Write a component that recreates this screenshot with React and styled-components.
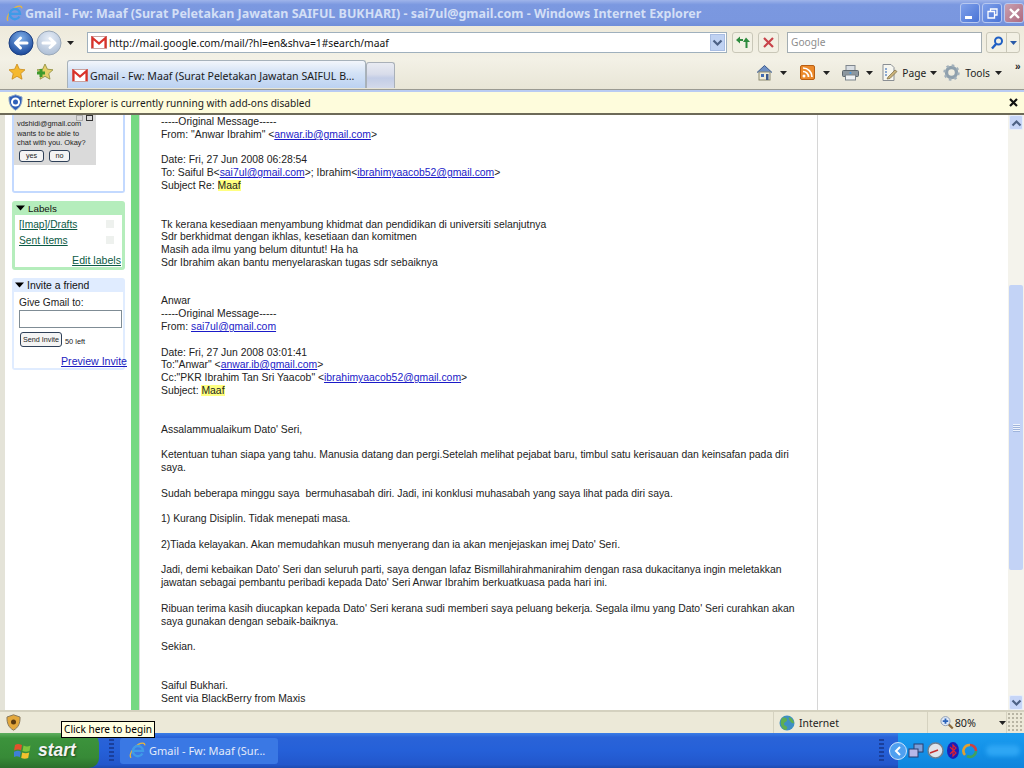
import React from "react"
import styled, { createGlobalStyle } from "styled-components"

const GlobalStyle = createGlobalStyle`
	html, body {
		margin: 0;
		padding: 0;
		background: #fff;
		overflow: hidden;
	}
	* {
		box-sizing: border-box;
	}
`

const GmailIcon = ({ size = 16 }) => (
	<svg width={size} height={(size * 13) / 16} viewBox="0 0 16 13">
		<rect x="0.5" y="0.5" width="15" height="12" fill="#fff" stroke="#c9a3a0" />
		<path d="M1.5 12V2L8 7.5 14.5 2V12" fill="none" stroke="#d9322a" strokeWidth="2.2" />
	</svg>
)

const IeLogo = ({ size = 16 }) => (
	<svg width={size} height={size} viewBox="0 0 20 20">
		<path d="M2.500 18.500C-.5 16 4 6.500 11 2.800c3.500-1.800 8-2.300 7.500 1.200" fill="none" stroke="#e8b63c" strokeWidth="1.500" />
		<path d="M15.800 13.500A6 6 0 1 1 16.500 10.500H5" fill="none" stroke="#3f9be8" strokeWidth="2.800" />
	</svg>
)

const NavButton = ({ dim }) => (
	<svg width="26" height="26" viewBox="0 0 26 26">
		<defs>
			<radialGradient id={dim ? "navDim" : "navOn"} cx="50%" cy="30%" r="75%">
				<stop offset="0" stopColor={dim ? "#e6edf7" : "#7fb0ea"} />
				<stop offset="1" stopColor={dim ? "#a9bbd3" : "#123f94"} />
			</radialGradient>
		</defs>
		<circle cx="13" cy="13" r="12" fill={`url(#${dim ? "navDim" : "navOn"})`} stroke={dim ? "#9aa8b8" : "#1c3f80"} />
		<path
			d={dim ? "M7 13h11M14 8.500l5 4.500-5 4.500" : "M19 13H8M12.500 8 7.500 13l5 5"}
			fill="none"
			stroke="#fff"
			strokeWidth="3"
			strokeLinecap="round"
			strokeLinejoin="round"
		/>
	</svg>
)

const Star = ({ plus }) => (
	<svg width="18" height="18" viewBox="0 0 18 18">
		<path
			d="M9 1l2.400 5.200 5.600.6-4.200 3.800 1.200 5.600L9 13.300 4 16.200l1.200-5.600L1 6.800l5.600-.6z"
			fill={plus ? "#e6cf6a" : "#f5b92f"}
			stroke={plus ? "#8a8a3a" : "#c98a1a"}
			strokeWidth="0.800"
		/>
		{plus && <path d="M1 10h8M5 6v8" stroke="#3f9a2c" strokeWidth="3" />}
	</svg>
)

const Caret = ({ color = "#222", w = 7, h = 4 }) => (
	<svg width={w} height={h} viewBox="0 0 7 4">
		<path d="M0 0h7L3.500 4z" fill={color} />
	</svg>
)

const Chevron = ({ up }) => (
	<svg width="11" height="8" viewBox="0 0 11 8">
		<path d={up ? "M1.500 6.500 5.500 2.500l4 4" : "M1.500 1.500l4 4 4-4"} fill="none" stroke="#4d6185" strokeWidth="2.200" />
	</svg>
)

const HomeIcon = () => (
	<svg width="17" height="17" viewBox="0 0 17 17">
		<path d="M1 8.500 8.500 1.500 16 8.500" fill="#6d8fc4" stroke="#3c5a8c" />
		<rect x="3" y="8" width="11" height="8" fill="#f0ecd8" stroke="#8c8a70" />
		<rect x="5" y="10" width="3" height="3" fill="#3f6cb4" />
		<rect x="10" y="10" width="2.500" height="6" fill="#3c5a8c" />
	</svg>
)

const RssIcon = () => (
	<svg width="15" height="15" viewBox="0 0 15 15">
		<rect x="0.500" y="0.500" width="14" height="14" rx="1.500" fill="#ec8a2c" stroke="#b85f14" />
		<circle cx="4" cy="11" r="1.500" fill="#fff" />
		<path d="M3 6.500a5.500 5.500 0 0 1 5.500 5.500M3 3a9 9 0 0 1 9 9" fill="none" stroke="#fff" strokeWidth="1.700" />
	</svg>
)

const PrintIcon = () => (
	<svg width="17" height="16" viewBox="0 0 17 16">
		<rect x="4" y="0.500" width="9" height="6" fill="#d8dde2" stroke="#80878e" />
		<rect x="0.500" y="5.500" width="16" height="6" rx="1" fill="#8c979f" stroke="#5d666d" />
		<rect x="3.500" y="10" width="10" height="5" fill="#eef1f3" stroke="#7c858c" />
		<circle cx="8.500" cy="8" r="1" fill="#3f9be8" />
	</svg>
)

const PageIcon = () => (
	<svg width="17" height="17" viewBox="0 0 17 17">
		<path d="M2 .5h8l3 3v13H2z" fill="#f6f6f0" stroke="#8a8f94" />
		<path d="M4 5h2M4 8h2M4 11h2" stroke="#6a90c8" strokeWidth="1.500" />
		<path d="M7 13l7-7 2 1.500-7 7-3 .5z" fill="#c9b27a" stroke="#7a6a40" strokeWidth="0.700" />
	</svg>
)

const GearIcon = () => (
	<svg width="17" height="17" viewBox="0 0 17 17">
		<circle cx="8.500" cy="8.500" r="5" fill="none" stroke="#8fa0ad" strokeWidth="3.400" />
		<circle cx="8.500" cy="8.500" r="7" fill="none" stroke="#a2b0ba" strokeWidth="2.400" strokeDasharray="2.500 3" />
	</svg>
)

const ShieldIcon = ({ fill, stroke, children }) => (
	<svg width="15" height="17" viewBox="0 0 15 17">
		<path d="M7.500.8 14 3c.3 6-1.500 10.500-6.500 13.200C2.500 13.500.7 9 1 3z" fill={fill} stroke={stroke} />
		{children}
	</svg>
)

const GlobeIcon = () => (
	<svg width="16" height="16" viewBox="0 0 16 16">
		<circle cx="8" cy="8" r="7.500" fill="#3e8fc4" />
		<path d="M3 3c3-1 5 0 5 2S5 7 5 9s2 1 3 3-1 3-2 3C3 14 0 8 3 3zM10 2c3 1 5 4 5 6-2 1-3-1-4-2S9 3 10 2z" fill="#5fae52" />
	</svg>
)

const ZoomIcon = () => (
	<svg width="15" height="15" viewBox="0 0 15 15">
		<path d="M9 9l5 5" stroke="#8c6a3c" strokeWidth="2.400" />
		<circle cx="6" cy="6" r="5" fill="#dfe9f7" stroke="#8c9ab0" />
		<path d="M3 6h6M6 3v6" stroke="#2a62b8" strokeWidth="2" />
	</svg>
)

const XpFlag = () => (
	<svg width="18" height="17" viewBox="0 0 18 17">
		<path d="M1 3c2-1.500 4-1.500 7 0l-1 5.500C5 7 3 7 0 8.500z" fill="#e0512c" />
		<path d="M9.500 3.500c2.500 1.200 4.500 1.200 7 0l-1 5.500c-2.500 1-4.500 1-7 0z" fill="#7cc63c" />
		<path d="M0 9.800c3-1.500 5-1.500 6.800 0l-1 5.500C4 14 2 14 0 15z" fill="#3f7fd8" />
		<path d="M8.200 10.500c2.500 1 4.500 1 7 0l-1 5.500c-2.500 1-4.500 1-7 0z" fill="#f2c12e" />
	</svg>
)

const TrayIcon = ({ kind }) => {
	if (kind === "net")
		return (
			<svg width="16" height="16" viewBox="0 0 16 16">
				<rect x="6" y="1" width="9" height="8" fill="#7c9fd8" stroke="#2a3f70" />
				<rect x="1" y="6" width="9" height="8" fill="#b7b8e8" stroke="#2a3f70" />
			</svg>
		)
	if (kind === "gauge")
		return (
			<svg width="17" height="17" viewBox="0 0 17 17">
				<circle cx="8.500" cy="8.500" r="7.500" fill="#dfe4ea" stroke="#6f7f90" strokeWidth="1.500" />
				<path d="M3 11l8-3" stroke="#c43030" strokeWidth="1.500" />
			</svg>
		)
	if (kind === "bt")
		return (
			<svg width="12" height="17" viewBox="0 0 12 17">
				<ellipse cx="6" cy="8.500" rx="6" ry="8.500" fill="#1a1fb8" />
				<path d="M3 5l6 6-3 3V3l3 3-6 6" fill="none" stroke="#e02030" strokeWidth="1.200" />
			</svg>
		)
	return (
		<svg width="16" height="16" viewBox="0 0 16 16">
			<path d="M3 12A6 6 0 0 1 8 2" fill="none" stroke="#e0a030" strokeWidth="2.600" />
			<path d="M8 2a6 6 0 0 1 6 6" fill="none" stroke="#d04040" strokeWidth="2.600" />
			<path d="M14 8a6 6 0 0 1-9 5" fill="none" stroke="#40a060" strokeWidth="2.600" />
		</svg>
	)
}

const mail = (a) => <MailLink>{a}</MailLink>

const getMessageLines = () => [
	<>-----Original Message-----</>,
	<>From: "Anwar Ibrahim" &lt;{mail("anwar.ib@gmail.com")}&gt;</>,
	null,
	<>Date: Fri, 27 Jun 2008 06:28:54</>,
	<>To: Saiful B&lt;{mail("sai7ul@gmail.com")}&gt;; Ibrahim&lt;{mail("ibrahimyaacob52@gmail.com")}&gt;</>,
	<>Subject Re: <Hit>Maaf</Hit></>,
	null,
	null,
	<>Tk kerana kesediaan menyambung khidmat dan pendidikan di universiti selanjutnya</>,
	<>Sdr berkhidmat dengan ikhlas, kesetiaan dan komitmen</>,
	<>Masih ada ilmu yang belum dituntut! Ha ha</>,
	<>Sdr Ibrahim akan bantu menyelaraskan tugas sdr sebaiknya</>,
	null,
	null,
	<>Anwar</>,
	<>-----Original Message-----</>,
	<>From: {mail("sai7ul@gmail.com")}</>,
	null,
	<>Date: Fri, 27 Jun 2008 03:01:41</>,
	<>To:"Anwar" &lt;{mail("anwar.ib@gmail.com")}&gt;</>,
	<>Cc:"PKR Ibrahim Tan Sri Yaacob" &lt;{mail("ibrahimyaacob52@gmail.com")}&gt;</>,
	<>Subject: <Hit>Maaf</Hit></>,
	null,
	null,
	<>Assalammualaikum Dato' Seri,</>,
	null,
	<>Ketentuan tuhan siapa yang tahu. Manusia datang dan pergi.Setelah melihat pejabat baru, timbul satu kerisauan dan keinsafan pada diri</>,
	<>saya.</>,
	null,
	<>Sudah beberapa minggu saya&nbsp; bermuhasabah diri. Jadi, ini konklusi muhasabah yang saya lihat pada diri saya.</>,
	null,
	<>1) Kurang Disiplin. Tidak menepati masa.</>,
	null,
	<>2)Tiada kelayakan. Akan memudahkan musuh menyerang dan ia akan menjejaskan imej Dato' Seri.</>,
	null,
	<>Jadi, demi kebaikan Dato' Seri dan seluruh parti, saya dengan lafaz Bismillahirahmanirahim dengan rasa dukacitanya ingin meletakkan</>,
	<>jawatan sebagai pembantu peribadi kepada Dato' Seri Anwar Ibrahim berkuatkuasa pada hari ini.</>,
	null,
	<>Ribuan terima kasih diucapkan kepada Dato' Seri kerana sudi memberi saya peluang bekerja. Segala ilmu yang Dato' Seri curahkan akan</>,
	<>saya gunakan dengan sebaik-baiknya.</>,
	null,
	<>Sekian.</>,
	null,
	null,
	<>Saiful Bukhari.</>,
	<>Sent via BlackBerry from Maxis</>,
]

function App() {
	return (
		<Screen>
			<GlobalStyle />
			<TitleBar>
				<IeLogo size={17} />
				<TitleText>Gmail - Fw: Maaf (Surat Peletakan Jawatan SAIFUL BUKHARI) - sai7ul@gmail.com - Windows Internet Explorer</TitleText>
				<WinButtons>
					<WinButton>
						<MinGlyph />
					</WinButton>
					<WinButton>
						<svg width="11" height="11" viewBox="0 0 11 11">
							<path d="M3.500 3V1h6.500v6H8M1 3.500h6.500V10H1z" fill="none" stroke="#fff" strokeWidth="1.300" />
						</svg>
					</WinButton>
					<WinButton $close>
						<svg width="13" height="13" viewBox="0 0 13 13">
							<path d="M2 2l9 9M11 2l-9 9" stroke="#fff" strokeWidth="2.400" />
						</svg>
					</WinButton>
				</WinButtons>
			</TitleBar>

			<AddressRow>
				<NavGroup>
					<NavButton />
					<NavButton dim />
					<NavCaret>
						<Caret />
					</NavCaret>
				</NavGroup>
				<AddressBox>
					<GmailIcon />
					<AddressText>http://mail.google.com/mail/?hl=en&amp;shva=1#search/maaf</AddressText>
					<AddressDrop>
						<Chevron />
					</AddressDrop>
				</AddressBox>
				<SquareButton>
					<svg width="16" height="13" viewBox="0 0 16 13">
						<path d="M1 4l4-3.500V3h3v2H5v2.500zM11 1.500 15 6h-2.500v6h-2V6H8z" fill="#2e8b3e" />
					</svg>
				</SquareButton>
				<SquareButton>
					<svg width="11" height="11" viewBox="0 0 11 11">
						<path d="M1 1l9 9M10 1l-9 9" stroke="#c8434a" strokeWidth="2.200" />
					</svg>
				</SquareButton>
				<SearchBox>Google</SearchBox>
				<SearchButton>
					<SearchHalf>
						<svg width="14" height="14" viewBox="0 0 14 14">
							<circle cx="8.500" cy="5" r="3.500" fill="none" stroke="#1f5fc4" strokeWidth="2" />
							<path d="M6 8l-4 4.500" stroke="#1f5fc4" strokeWidth="2.400" />
						</svg>
					</SearchHalf>
					<SearchDrop>
						<Caret color="#2a5aa8" />
					</SearchDrop>
				</SearchButton>
			</AddressRow>

			<TabRow>
				<Favs>
					<Star />
					<Star plus />
				</Favs>
				<ActiveTab>
					<GmailIcon />
					<span>Gmail - Fw: Maaf (Surat Peletakan Jawatan SAIFUL B...</span>
				</ActiveTab>
				<NewTab />
				<Tools>
					<ToolItem $gap={7} $after={13}>
						<HomeIcon />
						<Caret />
					</ToolItem>
					<ToolItem $gap={8} $after={12}>
						<RssIcon />
						<Caret />
					</ToolItem>
					<ToolItem $gap={7} $after={8}>
						<PrintIcon />
						<Caret />
					</ToolItem>
					<ToolItem $gap={4} $after={6}>
						<PageIcon />
						<span>Page</span>
						<Caret />
					</ToolItem>
					<ToolItem $gap={5}>
						<GearIcon />
						<span>Tools</span>
						<Caret />
					</ToolItem>
				</Tools>
				<More>»</More>
			</TabRow>

			<InfoBar>
				<ShieldIcon fill="#2f5fb8" stroke="#8fa6c8">
					<circle cx="7.500" cy="8" r="4.500" fill="#fff" />
					<circle cx="7.500" cy="8" r="2.500" fill="#2f5fb8" />
				</ShieldIcon>
				<InfoText>Internet Explorer is currently running with add-ons disabled</InfoText>
				<InfoClose>
					<svg width="9" height="9" viewBox="0 0 9 9">
						<path d="M1 1l7 7M8 1L1 8" stroke="#111" strokeWidth="2.200" />
					</svg>
				</InfoClose>
			</InfoBar>

			<Main>
				<Sidebar>
					<ChatPanel>
						<ChatInvite>
							<ChatIcons>
								<ChatIcon />
								<ChatIcon $dark />
							</ChatIcons>
							<div>vdshidi@gmail.com</div>
							<div>wants to be able to</div>
							<div>chat with you. Okay?</div>
							<ChatButtons>
								<SmallButton $w={25}>yes</SmallButton>
								<SmallButton $w={21}>no</SmallButton>
							</ChatButtons>
						</ChatInvite>
					</ChatPanel>

					<LabelsPanel>
						<PanelHead>
							<Caret color="#000" w={9} h={6} />
							<HeadCaretGap />
							Labels
						</PanelHead>
						<LabelsBody>
							<LabelRow>
								<LabelLink>[Imap]/Drafts</LabelLink>
								<LabelSwatch />
							</LabelRow>
							<LabelRow>
								<LabelLink>Sent Items</LabelLink>
								<LabelSwatch />
							</LabelRow>
							<EditLabels>Edit labels</EditLabels>
						</LabelsBody>
					</LabelsPanel>

					<InvitePanel>
						<PanelHead>
							<Caret color="#000" w={9} h={6} />
							<HeadCaretGap />
							<InviteTitle>Invite a friend</InviteTitle>
						</PanelHead>
						<InviteBody>
							<div>Give Gmail to:</div>
							<InviteInput />
							<SendRow>
								<SmallButton $w={42} $h={15}>Send Invite</SmallButton>
								<LeftCount>50 left</LeftCount>
							</SendRow>
							<PreviewLink>Preview Invite</PreviewLink>
						</InviteBody>
					</InvitePanel>
				</Sidebar>

				<GreenRail />

				<MessageColumn>
					{getMessageLines().map((line, index) => (
						<MessageLine key={index}>{line}</MessageLine>
					))}
				</MessageColumn>

				<SideGutter />

				<ScrollBar>
					<ScrollButton>
						<Chevron up />
					</ScrollButton>
					<ScrollTrack>
						<ScrollThumb>
							<ThumbGrip />
						</ScrollThumb>
					</ScrollTrack>
					<ScrollButton>
						<Chevron />
					</ScrollButton>
				</ScrollBar>
			</Main>

			<StatusBar>
				<StatusLeft>
					<ShieldIcon fill="#e3a83c" stroke="#8a7a5c">
						<circle cx="7.500" cy="8" r="2.500" fill="#5a3a10" />
					</ShieldIcon>
				</StatusLeft>
				<StatusZone>
					<GlobeIcon />
					<span>Internet</span>
				</StatusZone>
				<StatusZoom>
					<ZoomIcon />
					<span>80%</span>
					<ZoomCaret>
						<Caret />
					</ZoomCaret>
				</StatusZoom>
				<StatusGrip />
			</StatusBar>

			<TaskBar>
				<StartButton>
					<XpFlag />
					<StartText>start</StartText>
				</StartButton>
				<TaskGrip />
				<TaskButton>
					<IeLogo size={17} />
					<span>Gmail - Fw: Maaf (Sur...</span>
				</TaskButton>
				<TrayGrip />
				<Tray>
					<TrayToggle>
						<svg width="8" height="10" viewBox="0 0 8 10">
							<path d="M6 1L2 5l4 4" fill="none" stroke="#fff" strokeWidth="2" />
						</svg>
					</TrayToggle>
					<TrayIcon kind="net" />
					<TrayIcon kind="gauge" />
					<TrayIcon kind="bt" />
					<TrayIcon kind="swirl" />
					<ClockSmudge />
				</Tray>
			</TaskBar>

			<Tooltip>Click here to begin</Tooltip>
		</Screen>
	)
}

export default App

const uiFont = `"Noto Sans", "DejaVu Sans", sans-serif`
const bodyFont = `"Liberation Sans", Arial, sans-serif`

const Screen = styled.div`
	position: relative;
	width: 1024px;
	height: 768px;
	display: flex;
	flex-direction: column;
	overflow: hidden;
	font-family: ${bodyFont};
	background: #fff;
`
const TitleBar = styled.div`
	height: 26px;
	flex: none;
	display: flex;
	align-items: center;
	padding: 0 0 0 6px;
	background: linear-gradient(180deg, #9fb4ea 0%, #7b98e0 18%, #7a97df 80%, #6f8ed9 100%);
`
const TitleText = styled.div`
	margin-left: 2px;
	font: bold 12.5px ${uiFont};
	white-space: nowrap;
	color: #d3dff6;
`
const WinButtons = styled.div`
	margin-left: auto;
	display: flex;
	gap: 2px;
`
const WinButton = styled.div`
	width: 20px;
	height: 20px;
	display: flex;
	align-items: center;
	justify-content: center;
	border: 1px solid #b7c8f0;
	border-radius: 3px;
	background: ${(p) =>
		p.$close ? "linear-gradient(135deg, #c9a0b0, #ad6a80)" : "linear-gradient(135deg, #7fa0ea, #4a74d6)"};
`
const MinGlyph = styled.div`
	width: 7px;
	height: 3px;
	margin-top: 9px;
	margin-right: 3px;
	background: #fff;
`
const AddressRow = styled.div`
	height: 33px;
	flex: none;
	display: flex;
	align-items: center;
	padding: 0 4px 0 8px;
	background: linear-gradient(180deg, #eeeadb, #f3f1e6);
`
const NavGroup = styled.div`
	width: 79px;
	flex: none;
	display: flex;
	align-items: center;
	gap: 2px;
`
const NavCaret = styled.div`
	display: flex;
	margin-left: 3px;
`
const AddressBox = styled.div`
	width: 640px;
	height: 21px;
	flex: none;
	display: flex;
	align-items: center;
	padding: 0 1px 0 3px;
	background: #fff;
	border: 1px solid #9fb0bd;
`
const AddressText = styled.div`
	margin-left: 2px;
	font: 10.3px ${uiFont};
	color: #111;
	white-space: nowrap;
`
const AddressDrop = styled.div`
	margin-left: auto;
	width: 15px;
	height: 17px;
	display: flex;
	align-items: center;
	justify-content: center;
	background: #c0d2f2;
	border: 1px solid #a9bde2;
`
const SquareButton = styled.div`
	width: 21px;
	height: 21px;
	flex: none;
	margin-left: 5px;
	display: flex;
	align-items: center;
	justify-content: center;
	background: #f2f0e4;
	border: 1px solid #c9c7b8;
	border-radius: 3px;
`
const SearchBox = styled.div`
	width: 195px;
	height: 21px;
	flex: none;
	margin-left: 8px;
	padding-left: 3px;
	font: 10.2px/19px ${uiFont};
	color: #8d8d8d;
	background: #fff;
	border: 1px solid #a3adb2;
`
const SearchButton = styled.div`
	width: 34px;
	height: 21px;
	flex: none;
	margin-left: 4px;
	display: flex;
	background: #f2f0e4;
	border: 1px solid #c9c7b8;
	border-radius: 3px;
`
const SearchHalf = styled.div`
	flex: 1;
	display: flex;
	align-items: center;
	justify-content: center;
	border-right: 1px solid #c9c7b8;
`
const SearchDrop = styled.div`
	width: 12px;
	display: flex;
	align-items: center;
	justify-content: center;
`
const TabRow = styled.div`
	height: 33px;
	flex: none;
	display: flex;
	align-items: flex-end;
	padding: 0 0 2px 8px;
	background: linear-gradient(180deg, #f3f1e6, #e8e5d6);
	border-bottom: 2px solid #b9cbf3;
	box-shadow: inset 0 -1px 0 #9a9a92;
`
const Favs = styled.div`
	width: 59px;
	flex: none;
	align-self: center;
	display: flex;
	gap: 10px;
	margin-bottom: 3px;
`
const ActiveTab = styled.div`
	width: 299px;
	height: 28px;
	flex: none;
	display: flex;
	align-items: center;
	gap: 2px;
	padding: 2px 0 0 4px;
	font: 10.6px ${uiFont};
	color: #1a1a1a;
	white-space: nowrap;
	border: 1px solid #a7b2bb;
	border-bottom: none;
	border-radius: 3px 3px 0 0;
	background: linear-gradient(180deg, #f3f6fb 0%, #d3e2f6 45%, #bcd2f2 100%);
`
const NewTab = styled.div`
	width: 29px;
	height: 26px;
	flex: none;
	border: 1px solid #a9b0b8;
	border-bottom: none;
	border-radius: 3px 3px 0 0;
	background: linear-gradient(180deg, #e9ebf2 0%, #d8dcea 45%, #c3cde6 60%, #d3d9ea 100%);
`
const Tools = styled.div`
	margin-left: auto;
	align-self: center;
	display: flex;
	align-items: center;
	margin-bottom: 2px;
	font: 10.2px ${uiFont};
	color: #222;
`
const ToolItem = styled.div`
	display: flex;
	align-items: center;
	gap: ${(p) => p.$gap}px;
	margin-right: ${(p) => p.$after || 0}px;
`
const More = styled.div`
	align-self: flex-start;
	width: 22px;
	padding: 2px 0 0 13px;
	font: bold 10px ${bodyFont};
	color: #222;
`
const InfoBar = styled.div`
	height: 23px;
	flex: none;
	display: flex;
	align-items: center;
	padding: 0 3px 0 8px;
	background: #fefcdc;
	border-bottom: 2px solid #6d6a58;
`
const InfoText = styled.div`
	margin-left: 4px;
	font: 10.1px ${uiFont};
	color: #1a1a1a;
`
const InfoClose = styled.div`
	margin-left: auto;
	margin-right: 3px;
	display: flex;
`
const Main = styled.div`
	flex: 1;
	min-height: 0;
	display: flex;
	overflow: hidden;
	border-left: 5px solid #e4e3d8;
	background: #fff;
`
const Sidebar = styled.div`
	width: 126px;
	flex: none;
	display: flex;
	flex-direction: column;
	padding-left: 7px;
`
const ChatPanel = styled.div`
	width: 113px;
	height: 78px;
	flex: none;
	border: 2px solid #c3d9ff;
	border-top: none;
	border-radius: 0 0 3px 3px;
`
const ChatInvite = styled.div`
	width: 82px;
	height: 50px;
	padding: 4px 0 0 3px;
	font-size: 7.4px;
	line-height: 9.6px;
	color: #222;
	background: #dadada;
`
const ChatIcons = styled.div`
	height: 1px;
	display: flex;
	justify-content: flex-end;
	gap: 3px;
	padding-right: 3px;
	margin-top: -4px;
	margin-bottom: 3px;
`
const ChatIcon = styled.div`
	width: 7px;
	height: 6px;
	border: 1px solid ${(p) => (p.$dark ? "#333" : "#aaa")};
`
const ChatButtons = styled.div`
	display: flex;
	gap: 5px;
	margin: 2px 0 0 2px;
`
const SmallButton = styled.div`
	width: ${(p) => p.$w}px;
	height: ${(p) => p.$h || 12}px;
	display: flex;
	align-items: center;
	justify-content: center;
	font-size: 7.2px;
	color: #222;
	background: #f4f4f4;
	border: 1px solid #2f4058;
	border-radius: 3px;
`
const LabelsPanel = styled.div`
	width: 113px;
	height: 69px;
	flex: none;
	margin-top: 8px;
	padding: 0 3px 3px;
	background: #b5edbc;
	border-radius: 3px;
`
const PanelHead = styled.div`
	height: 14px;
	display: flex;
	align-items: center;
	padding-left: 1px;
	font-size: 9.8px;
	color: #111;
`
const HeadCaretGap = styled.div`
	width: 3px;
`
const InviteTitle = styled.span`
	font-size: 10.4px;
`
const LabelsBody = styled.div`
	height: 52px;
	padding: 1px 2px 0 4px;
	background: #fff;
	display: flex;
	flex-direction: column;
`
const LabelRow = styled.div`
	height: 16px;
	display: flex;
	align-items: center;
	justify-content: space-between;
	padding-right: 6px;
`
const LabelLink = styled.span`
	font-size: 10.2px;
	color: #0b5a45;
	text-decoration: underline;
`
const LabelSwatch = styled.div`
	width: 8px;
	height: 8px;
	background: #eef1ee;
`
const EditLabels = styled.div`
	margin-top: auto;
	margin-right: -1px;
	text-align: right;
	font-size: 10.6px;
	color: #0b5a45;
	text-decoration: underline;
	padding-bottom: 1px;
`
const InvitePanel = styled.div`
	width: 113px;
	height: 92px;
	flex: none;
	margin-top: 8px;
	background: #e0ecff;
	padding: 0 2px 2px;
	border-radius: 3px;
`
const InviteBody = styled.div`
	height: 76px;
	padding: 5px 0 0 5px;
	font-size: 10.2px;
	color: #222;
	background: #fff;
	display: flex;
	flex-direction: column;
`
const InviteInput = styled.div`
	width: 103px;
	height: 18px;
	margin: 2px 0 0 0;
	flex: none;
	border: 1px solid #7f8c95;
`
const SendRow = styled.div`
	display: flex;
	align-items: center;
	gap: 3px;
	margin: 4px 0 0 1px;
`
const LeftCount = styled.span`
	font-size: 7.4px;
	padding-top: 3px;
`
const PreviewLink = styled.div`
	margin: 8px -4px 0 0;
	text-align: right;
	white-space: nowrap;
	font-size: 10.6px;
	color: #1a1ac0;
	text-decoration: underline;
`
const GreenRail = styled.div`
	width: 8px;
	flex: none;
	background: #76d983;
`
const MessageColumn = styled.div`
	width: 679px;
	flex: none;
	padding: 1px 0 0 21px;
	border-left: 1px solid #dcdcdc;
	border-right: 1px solid #d6d6d6;
	font-size: 10.4px;
	color: #222;
`
const MessageLine = styled.div`
	height: 12.82px;
	line-height: 12.82px;
	white-space: nowrap;
`
const MailLink = styled.span`
	color: #1a1ac8;
	text-decoration: underline;
`
const Hit = styled.span`
	background: #ffff80;
`
const SideGutter = styled.div`
	flex: 1;
`
const ScrollBar = styled.div`
	width: 16px;
	flex: none;
	display: flex;
	flex-direction: column;
	align-items: center;
	background: #f4f3ec;
`
const ScrollButton = styled.div`
	width: 14px;
	height: 15px;
	flex: none;
	display: flex;
	align-items: center;
	justify-content: center;
	background: #c6d5f7;
	border: 1px solid #e8eefa;
	border-radius: 2px;
`
const ScrollTrack = styled.div`
	flex: 1;
	width: 100%;
	display: flex;
	flex-direction: column;
	align-items: center;
	padding-top: 155px;
`
const ScrollThumb = styled.div`
	width: 14px;
	height: 285px;
	display: flex;
	align-items: center;
	justify-content: center;
	background: #c3d3f6;
	border-radius: 2px;
`
const ThumbGrip = styled.div`
	width: 7px;
	height: 8px;
	background: repeating-linear-gradient(180deg, #eef3fc 0 1px, #9fb4dc 1px 2px);
`
const StatusBar = styled.div`
	height: 23px;
	flex: none;
	display: flex;
	align-items: center;
	font: 10.4px ${uiFont};
	color: #222;
	background: #ece9d8;
	border-top: 2px solid #d4d1bf;
`
const StatusLeft = styled.div`
	width: 773px;
	flex: none;
	padding-left: 6px;
	display: flex;
	align-items: center;
`
const StatusZone = styled.div`
	width: 154px;
	height: 100%;
	flex: none;
	display: flex;
	align-items: center;
	gap: 4px;
	padding-left: 5px;
	border-left: 1px solid #d5d2c0;
`
const StatusZoom = styled.div`
	width: 80px;
	height: 100%;
	flex: none;
	display: flex;
	align-items: center;
	gap: 1px;
	padding-left: 12px;
	font-size: 10.8px;
	border-left: 1px solid #d5d2c0;
	border-right: 1px solid #d5d2c0;
`
const ZoomCaret = styled.div`
	display: flex;
	margin-left: 22px;
`
const StatusGrip = styled.div`
	flex: 1;
	height: 100%;
	background: radial-gradient(#b8b5a4 1px, transparent 1.2px) 0 0 / 4px 4px;
`
const TaskBar = styled.div`
	height: 35px;
	flex: none;
	display: flex;
	align-items: center;
	background: linear-gradient(180deg, #3a7de6 0%, #2a63d8 12%, #2560d8 50%, #2257cc 90%, #1d4bb0 100%);
`
const StartButton = styled.div`
	width: 99px;
	height: 100%;
	flex: none;
	display: flex;
	align-items: center;
	gap: 6px;
	padding-left: 14px;
	border-radius: 0 10px 10px 0;
	background: linear-gradient(180deg, #5fae5f 0%, #3c933c 15%, #378a37 70%, #2c6f2c 100%);
`
const StartText = styled.span`
	font: italic bold 17.5px ${bodyFont};
	color: #f4f4f4;
	text-shadow: 1px 1px 2px #1d4a1d;
`
const TaskGrip = styled.div`
	width: 5px;
	height: 24px;
	flex: none;
	margin-left: 10px;
	background: repeating-linear-gradient(180deg, #1a3f9c 0 2px, transparent 2px 4px);
`
const TaskButton = styled.div`
	width: 158px;
	height: 26px;
	flex: none;
	margin-left: 6px;
	display: flex;
	align-items: center;
	gap: 3px;
	padding-left: 9px;
	font: 11px ${uiFont};
	color: #e4ecfa;
	white-space: nowrap;
	background: #3a78e4;
	border-radius: 3px;
`
const TrayGrip = styled.div`
	width: 5px;
	height: 24px;
	flex: none;
	margin: 0 14px 0 auto;
	background: repeating-linear-gradient(180deg, #1a3f9c 0 2px, transparent 2px 4px);
`
const Tray = styled.div`
	width: 126px;
	height: 100%;
	flex: none;
	display: flex;
	align-items: center;
	gap: 3px;
	background: linear-gradient(180deg, #1a9cf0 0%, #1391e8 50%, #0f84dc 100%);
`
const TrayToggle = styled.div`
	width: 18px;
	height: 18px;
	flex: none;
	margin: 0 -2px 0 -9px;
	display: flex;
	align-items: center;
	justify-content: center;
	border-radius: 50%;
	background: #4fa0f0;
	border: 1px solid #cfe4fb;
`
const ClockSmudge = styled.div`
	width: 34px;
	height: 11px;
	margin-left: 5px;
	border-radius: 6px;
	background: #2ea6f4;
	filter: blur(2px);
`
const Tooltip = styled.div`
	position: absolute;
	left: 61px;
	top: 721px;
	width: 94px;
	height: 17px;
	padding-left: 2px;
	font: 10.1px/15px ${uiFont};
	color: #000;
	white-space: nowrap;
	background: #ffffe1;
	border: 1px solid #000;
`
